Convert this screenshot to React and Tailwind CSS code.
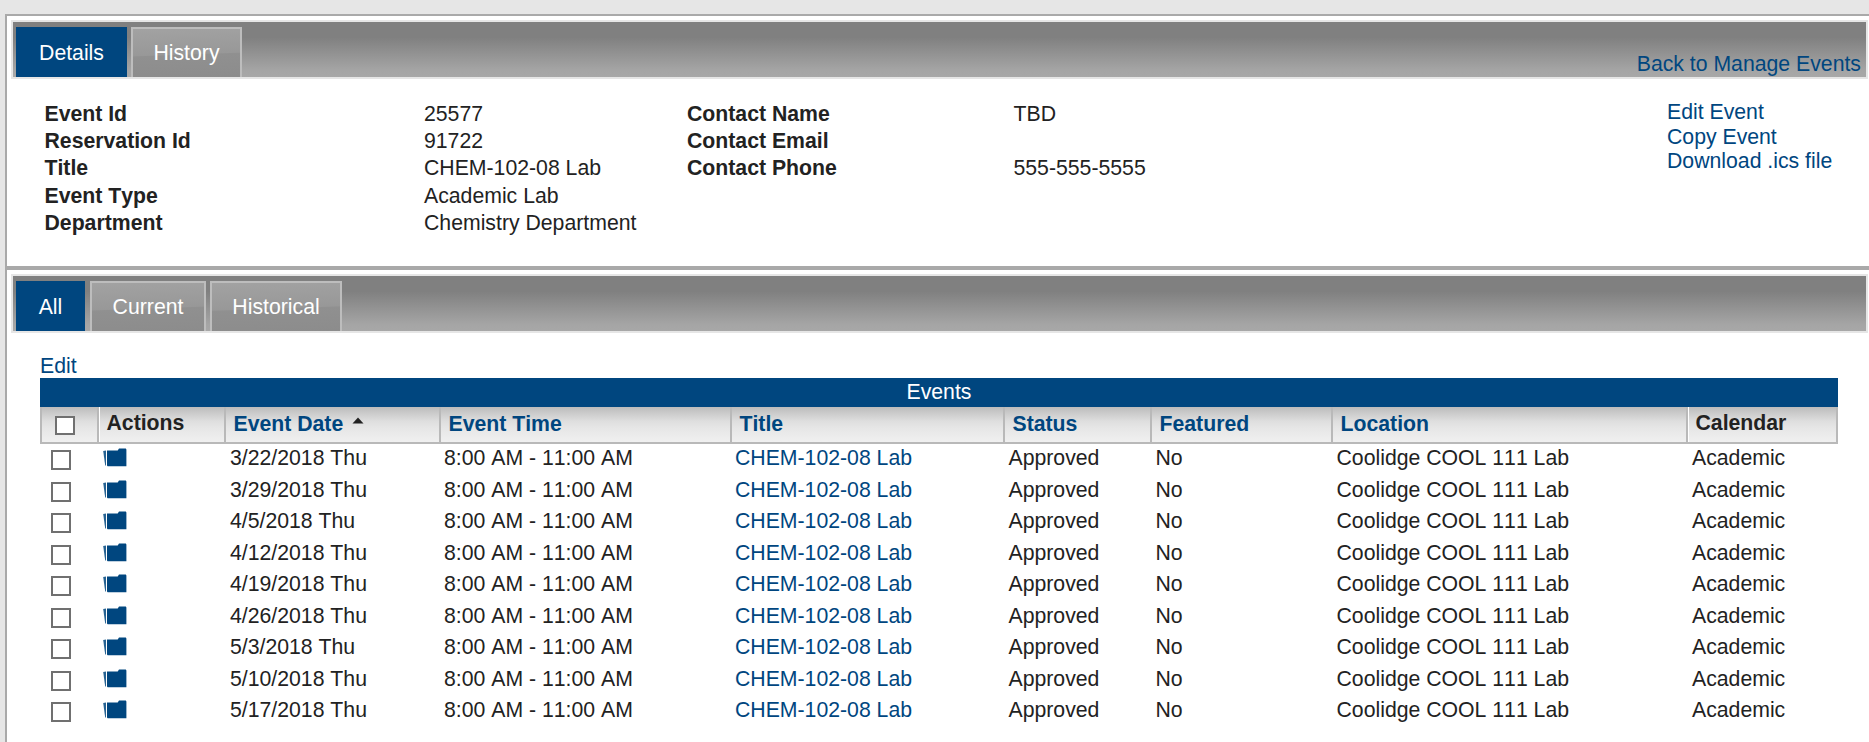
const COLUMNS = [
  { label: 'Actions', link: false },
  { label: 'Event Date', link: true, sorted: true },
  { label: 'Event Time', link: true },
  { label: 'Title', link: true },
  { label: 'Status', link: true },
  { label: 'Featured', link: true },
  { label: 'Location', link: true },
  { label: 'Calendar', link: false },
];

const DATES = [
  '3/22/2018 Thu',
  '3/29/2018 Thu',
  '4/5/2018 Thu',
  '4/12/2018 Thu',
  '4/19/2018 Thu',
  '4/26/2018 Thu',
  '5/3/2018 Thu',
  '5/10/2018 Thu',
  '5/17/2018 Thu',
];

const GRID = 'grid grid-cols-[59px_127px_215px_291px_273px_147px_181px_355px_150px]';

function FolderIcon() {
  return (
    <svg className="block h-5 w-6" viewBox="0 0 24 20" fill="#00467f">
      <path d="M0.2 3 L3 2.4 V17.6 H2.2 Z" opacity="0.85" />
      <path d="M4 2.4 H14.7 L16 0.6 H22.8 L23.4 1.4 V18.2 H4.6 L4 17.5 Z" />
    </svg>
  );
}

function Checkbox({ className = '' }) {
  return <span role="checkbox" aria-checked="false" className={`block border-2 border-[#707070] bg-white ${className}`} />;
}

function Tab({ label, active, className }) {
  const look = active
    ? 'bg-[#00467f]'
    : 'border-2 border-b-0 border-[#bdbdbd] bg-[linear-gradient(178deg,#a2a2a2_0%,#989898_52%,#909090_54%,#8c8c8c_100%)]';
  return (
    <div className={`h-[50px] text-center text-white ${active ? 'pt-1' : 'pt-0.5'} leading-[45px] ${look} ${className}`}>
      {label}
    </div>
  );
}

function TabBar({ children, action }) {
  return (
    <div className="ml-1 mr-px mt-1 flex h-[59px] border-2 border-[#e6e6e6] bg-[linear-gradient(to_bottom,#808080_0%,#808080_28%,#a5a5a5_88%,#a8a8a8_100%)] pl-[3px] pt-[5px]">
      {children}
      {action && <a className="ml-auto mr-[5px] mt-[17px] leading-[40px] text-[#00467f]">{action}</a>}
    </div>
  );
}

function Field({ label, value, className }) {
  return (
    <div className="flex h-[27.3px] leading-[27.3px]">
      <span className={`font-bold ${className}`}>{label}</span>
      <span>{value}</span>
    </div>
  );
}

export default function App() {
  return (
    <div className="h-[742px] w-[1869px] overflow-hidden bg-[#e6e6e6] pl-[5px] pt-[14px] font-['Liberation_Sans',Arial,sans-serif] text-[21.24px] whitespace-nowrap text-[#222] [font-kerning:none]">
      <section className="h-[254px] border-2 border-r-0 border-[#a9a9a9] bg-white">
        <TabBar action="Back to Manage Events">
          <Tab label="Details" active className="w-[111px]" />
          <Tab label="History" className="ml-1 w-[111px]" />
        </TabBar>
        <div className="flex pl-[37.5px] pt-[21px]">
          <div className="w-[642.5px] pt-[0.7px]">
            <Field label="Event Id" value="25577" className="w-[379.5px]" />
            <Field label="Reservation Id" value="91722" className="w-[379.5px]" />
            <Field label="Title" value="CHEM-102-08 Lab" className="w-[379.5px]" />
            <Field label="Event Type" value="Academic Lab" className="w-[379.5px]" />
            <Field label="Department" value="Chemistry Department" className="w-[379.5px]" />
          </div>
          <div className="w-[980px] pt-[0.7px]">
            <Field label="Contact Name" value="TBD" className="w-[326.5px]" />
            <Field label="Contact Email" value="" className="w-[326.5px]" />
            <Field label="Contact Phone" value="555-555-5555" className="w-[326.5px]" />
          </div>
          <div className="flex flex-col leading-[24.5px] text-[#00467f]">
            <a>Edit Event</a>
            <a>Copy Event</a>
            <a>Download .ics file</a>
          </div>
        </div>
      </section>

      <section className="h-[480px] border-2 border-r-0 border-[#a9a9a9] bg-white">
        <TabBar>
          <Tab label="All" active className="w-[69px]" />
          <Tab label="Current" className="ml-[5px] w-[116px]" />
          <Tab label="Historical" className="ml-1 w-[132px]" />
        </TabBar>
        <div className="ml-[33px] w-[1798px] pt-5">
          <a className="block h-[25px] leading-[27px] text-[#00467f]">Edit</a>
          <div className="h-[29px] bg-[#00467f] text-center leading-[28px] text-white">Events</div>
          <div className={`${GRID} h-[37px] border-2 border-t-0 border-[#b9b9b9] bg-[linear-gradient(to_bottom,#bcbcbc_0%,#dedede_40%,#e6e6e6_60%,#f0f0f0_100%)]`}>
            <div className="w-[57px] border-r-2 border-[#b9b9b9] pl-[13px] pt-[9px]">
              <Checkbox className="h-[19px] w-5" />
            </div>
            {COLUMNS.map((c) => (
              <div
                key={c.label}
                className={`-ml-[2px] mr-[2px] flex border-r-2 border-[#b9b9b9] font-bold last:mr-0 last:border-r-0 ${
                  c.link ? 'pl-[7.5px] leading-[35px] text-[#00467f]' : 'pl-[7.5px] leading-[33px] shadow-[inset_1px_0_#fff]'
                }`}
              >
                {c.label}
                {c.sorted && (
                  <svg className="ml-[9px] mt-[10px] h-[7px] w-3" viewBox="0 0 12 7" fill="#222">
                    <path d="M0.5 6.5 L6 0.5 L11.5 6.5 Z" />
                  </svg>
                )}
              </div>
            ))}
          </div>
          {DATES.map((date) => (
            <div key={date} className={`${GRID} h-[31.5px] leading-[28.3px]`}>
              <div className="pl-[11px] pt-[6px]">
                <Checkbox className="size-5" />
              </div>
              <div className="pl-1 pt-1">
                <FolderIcon />
              </div>
              <div className="pl-1">{date}</div>
              <div className="pl-[3px]">8:00 AM - 11:00 AM</div>
              <a className="pl-[3px] text-[#00467f]">CHEM-102-08 Lab</a>
              <div className="pl-[3.5px]">Approved</div>
              <div className="pl-[3.5px]">No</div>
              <div className="pl-[3.5px]">Coolidge COOL 111 Lab</div>
              <div className="pl-1">Academic</div>
            </div>
          ))}
        </div>
      </section>
    </div>
  );
}
